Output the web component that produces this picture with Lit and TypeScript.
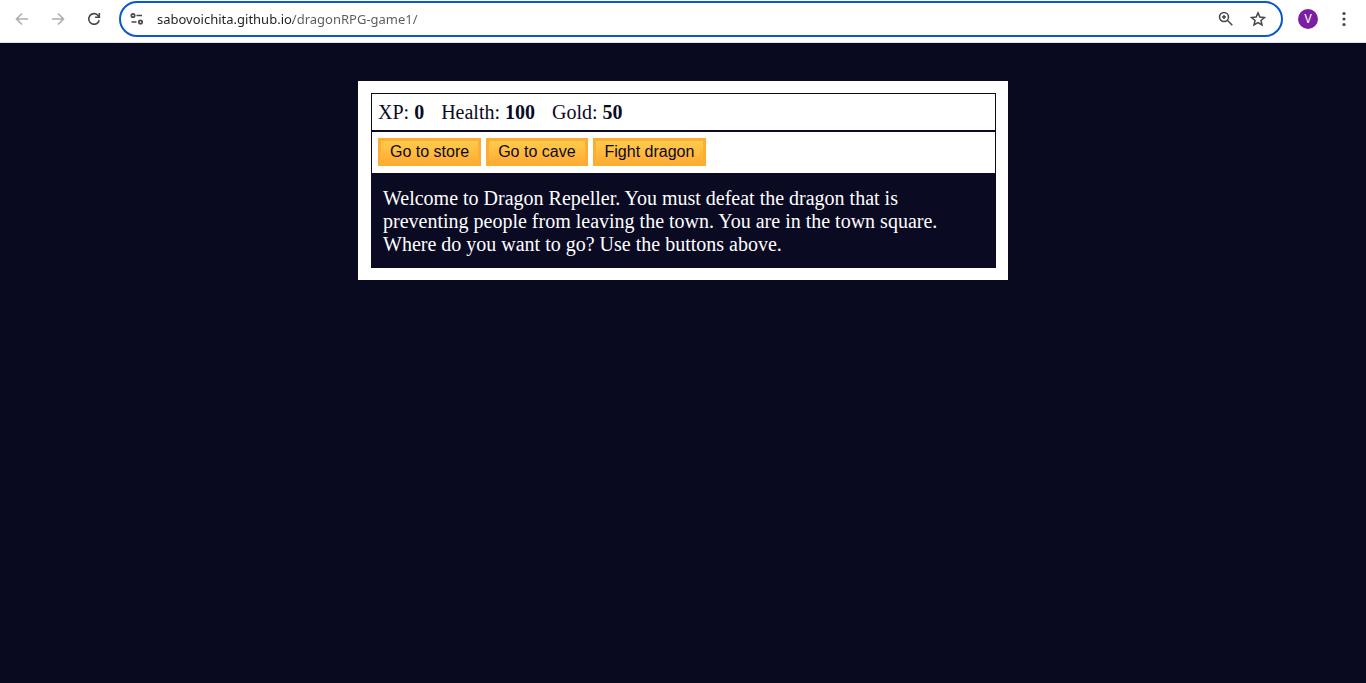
import { LitElement, html, css } from "lit";
import { customElement, state } from "lit/decorators.js";

@customElement("browser-toolbar")
class BrowserToolbar extends LitElement {
  static styles = css`
    :host {
      display: flex;
      align-items: center;
      box-sizing: border-box;
      height: 43px;
      padding: 0 12px 4px;
      background: #fff;
      border-bottom: 1px solid #dfe3e3;
      color: #474747;
    }
    button {
      display: grid;
      place-items: center;
      flex: none;
      padding: 0;
      border: 0;
      background: none;
      color: inherit;
    }
    svg {
      display: block;
    }
    .nav {
      display: flex;
      gap: 16px;
      margin-right: 15px;
    }
    .icon {
      width: 20px;
      height: 20px;
    }
    .icon:disabled {
      color: #adadad;
    }
    .omnibox {
      display: flex;
      flex: 1;
      align-items: center;
      box-sizing: border-box;
      height: 36px;
      padding: 0 13px 0 6px;
      border: 2px solid #0b57d0;
      border-radius: 18px;
    }
    .address {
      flex: 1;
      min-width: 0;
      height: 24px;
      margin: 0 12px 0 10px;
      padding: 0;
      border: 0;
      outline: 0;
      font: 13px/20px "Noto Sans", "Open Sans", sans-serif;
      color: transparent;
      background: linear-gradient(90deg, #1f1f1f 136px, #5a5a5a 136px);
      background-clip: text;
      -webkit-background-clip: text;
    }
    .actions {
      display: flex;
      gap: 12px;
    }
    .account {
      display: flex;
      gap: 16px;
      margin-left: 15px;
    }
    .avatar {
      width: 20px;
      height: 20px;
      border-radius: 50%;
      background: #7b1fa2;
      color: #fff;
      font: 12px/20px Roboto, sans-serif;
    }
  `;

  render() {
    return html`
      <div class="nav">
        <button class="icon" aria-label="Back" disabled>
          <svg width="20" height="20" fill="none" stroke="currentColor" stroke-width="1.6">
            <path d="M16 10H5M10 4.5 4.5 10l5.5 5.5" />
          </svg>
        </button>
        <button class="icon" aria-label="Forward" disabled>
          <svg width="20" height="20" fill="none" stroke="currentColor" stroke-width="1.6">
            <path d="M4 10h11M10 4.5 15.5 10 10 15.5" />
          </svg>
        </button>
        <button class="icon" aria-label="Reload">
          <svg width="20" height="20" fill="none" stroke="currentColor" stroke-width="1.6">
            <path d="M15.2 11.2a5.3 5.3 0 1 1-1.4-5L15.2 7.8" />
            <path d="M15.3 4v4.2h-4.2" />
          </svg>
        </button>
      </div>
      <div class="omnibox">
        <button class="icon" aria-label="View site information">
          <svg width="20" height="20" fill="none" stroke="currentColor" stroke-width="1.7">
            <circle cx="6" cy="6.5" r="1.7" />
            <path d="M9.500 6.500h5.500M4.500 13h5" />
            <circle cx="13.500" cy="13" r="1.700" />
          </svg>
        </button>
        <input
          class="address"
          type="text"
          aria-label="Address and search bar"
          spellcheck="false"
          .value=${"sabovoichita.github.io/dragonRPG-game1/"}
        />
        <div class="actions">
          <button class="icon" aria-label="Zoom">
            <svg width="20" height="20" fill="none" stroke="currentColor" stroke-width="1.5">
              <circle cx="8" cy="8" r="4.5" />
              <path d="m11.3 11.3 5 5M8 6v4M6 8h4" />
            </svg>
          </button>
          <button class="icon" aria-label="Bookmark this tab">
            <svg width="20" height="20" fill="none" stroke="currentColor" stroke-width="1.5">
              <path d="m10 3.9 1.85 4.2 4.600.4-3.5 3 1.05 4.5-4-2.4-4 2.4 1.05-4.5-3.5-3 4.6-.4z" />
            </svg>
          </button>
        </div>
      </div>
      <div class="account">
        <button class="avatar" aria-label="Profile">V</button>
        <button class="icon" aria-label="Menu">
          <svg width="20" height="20" fill="currentColor">
            <circle cx="10" cy="4.5" r="1.6" />
            <circle cx="10" cy="10" r="1.6" />
            <circle cx="10" cy="15.5" r="1.6" />
          </svg>
        </button>
      </div>
    `;
  }
}

@customElement("dragon-game")
class DragonGame extends LitElement {
  static styles = css`
    :host {
      display: block;
      box-sizing: border-box;
      width: 100%;
      max-width: 650px;
      margin: 38px auto 0;
      padding: 12px 12px 12px 13px;
      background: #fff;
      color: #0a0a23;
      font: 20px/23px "Liberation Serif", "Times New Roman", serif;
    }
    .stats,
    .controls {
      display: flex;
      flex-wrap: wrap;
      border: 1px solid #0a0a23;
    }
    .stats {
      gap: 17px;
      padding: 7px 6px 6px;
    }
    .controls {
      gap: 5px;
      padding: 6px 6px 7px;
    }
    .controls button {
      height: 28px;
      padding: 0 9px;
      border: 3px solid #feac32;
      background: linear-gradient(#fecc4c, #ffac33);
      color: #0a0a23;
      font: 16px/20px "Liberation Sans", Arial, sans-serif;
      cursor: pointer;
    }
    .text {
      margin: 0;
      padding: 13px 12px 12px;
      background: #0a0a23;
      color: #fff;
    }
  `;

  @state() private stats = [
    { label: "XP", value: 0 },
    { label: "Health", value: 100 },
    { label: "Gold", value: 50 },
  ];

  render() {
    return html`
      <div class="stats">
        ${this.stats.map((s) => html`<span>${s.label}: <strong>${s.value}</strong></span>`)}
      </div>
      <div class="controls">
        <button>Go to store</button>
        <button>Go to cave</button>
        <button>Fight dragon</button>
      </div>
      <p class="text">
        Welcome to Dragon Repeller. You must defeat the dragon that is preventing people from
        leaving the town. You are in the town square. Where do you want to go? Use the buttons
        above.
      </p>
    `;
  }
}

@customElement("app-root")
class AppRoot extends LitElement {
  static styles = css`
    :host {
      display: flex;
      flex-direction: column;
      min-height: 100vh;
      background: #090920;
    }
  `;

  render() {
    return html`
      <browser-toolbar></browser-toolbar>
      <main><dragon-game></dragon-game></main>
    `;
  }
}
